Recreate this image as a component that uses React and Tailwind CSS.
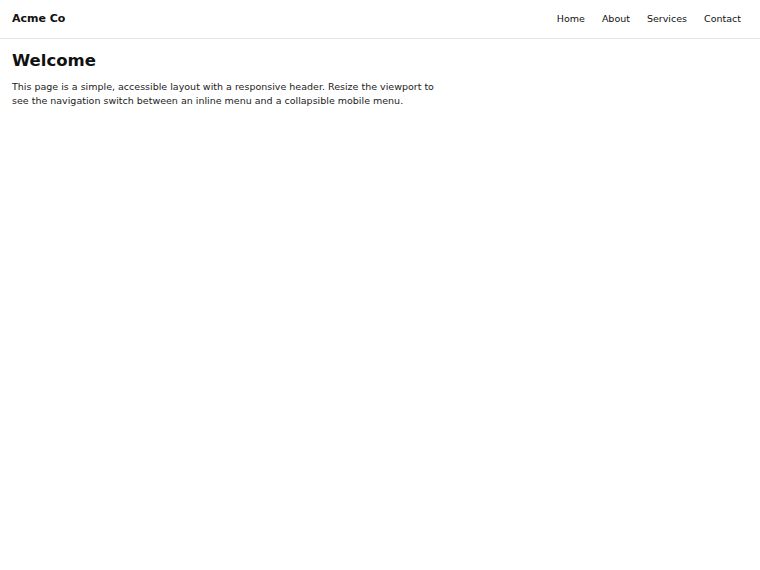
export default function App() {
  const links = ['Home', 'About', 'Services', 'Contact'];
  return (
    <div className="min-h-screen bg-white text-[#111] font-['DejaVu_Sans',sans-serif]">
      <header className="flex h-[39px] items-center justify-between border-b border-[#e5e5e5] pl-3 pr-[19px]">
        <span className="text-[11px] font-bold">Acme Co</span>
        <nav className="flex gap-[17px] text-[9.5px]">
          {links.map(l => (
            <a key={l} href="#" className="text-[#111]">{l}</a>
          ))}
        </nav>
      </header>
      <main className="px-3 pt-[12px]">
        <h1 className="text-[16.5px] font-bold leading-[20px]">Welcome</h1>
        <p className="mt-[9px] max-w-[436px] text-[9.5px] leading-[14px] text-[#222]">
          This page is a simple, accessible layout with a responsive header. Resize the viewport to see the navigation switch between an inline menu and a collapsible mobile menu.
        </p>
      </main>
    </div>
  );
}
